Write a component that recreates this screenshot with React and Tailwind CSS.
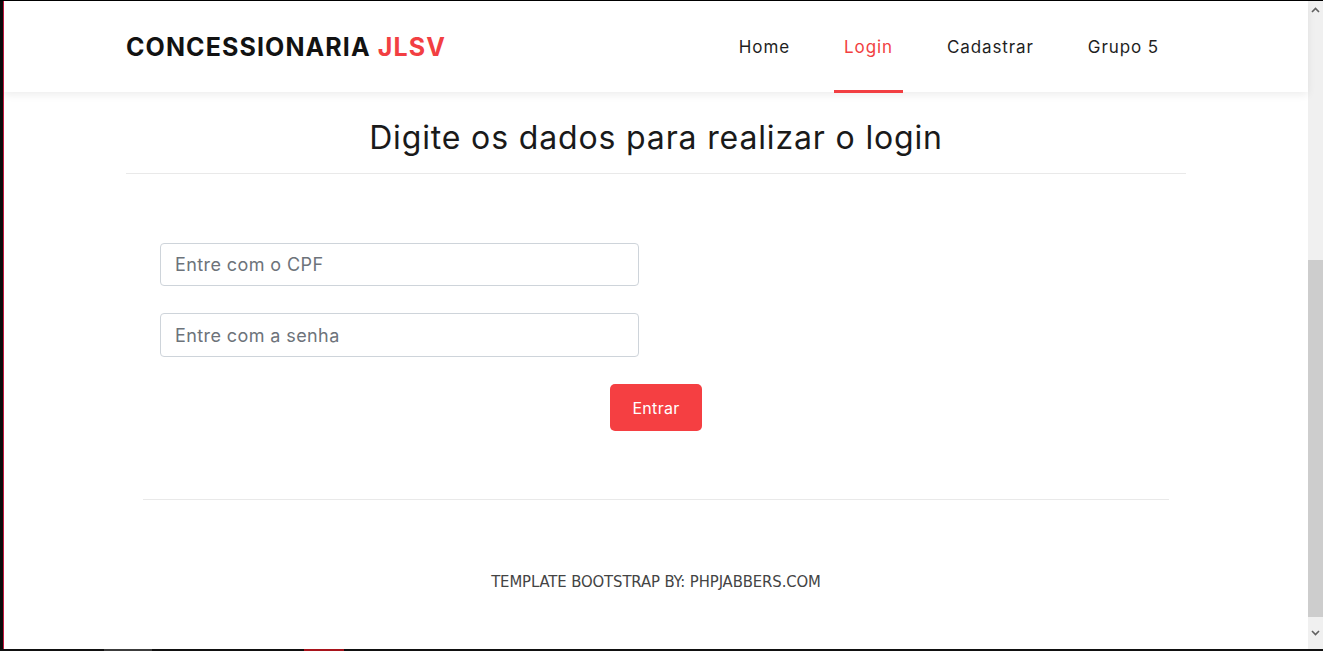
import React from "react";

const font = { fontFamily: "Inter, 'Noto Sans', sans-serif" };

export default function App() {
  return (
    <div className="w-[1323px] h-[651px] bg-black flex flex-col overflow-hidden" style={font}>
      <div className="h-px bg-black" />
      <div className="flex flex-1 min-h-0">
        <div className="w-[3px] bg-[#0b0b0b]" />
        <div className="w-px bg-[#c2183f]" />
        <main className="flex-1 bg-white flex flex-col relative min-w-0">
          <header className="h-[91px] bg-white shadow-[0_3px_8px_rgba(0,0,0,0.07)] relative z-10 flex items-stretch pl-[122px] pr-[139px] justify-between">
            <div className="flex items-center text-[25px] font-bold tracking-[1.1px] text-[#121212] pt-[3px]">
              CONCESSIONARIA&nbsp;<span className="text-[#f23f42]">JLSV</span>
            </div>
            <nav className="flex items-stretch gap-[34px] text-[17px] text-[#1f1f1f] tracking-[0.9px]">
              <a className="flex items-center px-[10px] pt-[3px]">Home</a>
              <a className="flex items-center px-[10px] pt-[3px] text-[#f23f42] relative">
                Login
                <span className="absolute left-0 right-0 -bottom-px h-[3px] bg-[#f23f42]" />
              </a>
              <a className="flex items-center px-[10px] pt-[3px]">Cadastrar</a>
              <a className="flex items-center px-[10px] pt-[3px]">Grupo 5</a>
            </nav>
          </header>

          <section className="px-[122px]">
            <h2 className="text-center text-[32px] font-normal text-[#1a1a1a] tracking-[0.85px] pt-[25px] pb-[15px] leading-[41px] border-b border-[#e9e9e9]">
              Digite os dados para realizar o login
            </h2>
          </section>

          <section className="pl-[156px] pt-[69px] flex flex-col gap-[27px]">
            <input
              placeholder="Entre com o CPF"
              className="w-[479px] h-[43px] border border-[#ced4da] rounded-[4px] px-[14px] text-[18px] tracking-[0.4px] placeholder:text-[#6d737a] outline-none"
            />
            <input
              placeholder="Entre com a senha"
              className="w-[479px] h-[44px] border border-[#ced4da] rounded-[4px] px-[14px] text-[18px] tracking-[0.4px] placeholder:text-[#6d737a] outline-none"
            />
          </section>
          <div className="flex justify-center pt-[27px]">
            <button className="w-[92px] h-[47px] bg-[#f53f42] text-white text-[16px] tracking-[0.3px] rounded-[5px]">
              Entrar
            </button>
          </div>

          <div className="mx-[139px] mt-[68px] border-t border-[#e9e9e9]" />
          <footer className="flex justify-center pt-[72px]">
            <span
              className="text-[16.5px] leading-[20px] text-[#444] font-light tracking-[-0.1px]"
              style={{ fontFamily: "'DejaVu Sans Condensed', 'Open Sans', sans-serif" }}
            >
              TEMPLATE BOOTSTRAP BY: PHPJABBERS.COM
            </span>
          </footer>
        </main>
        <aside className="w-[15px] bg-[#f0f0f0] flex flex-col items-center">
          <div className="h-[17px] flex items-center justify-center">
            <svg width="9" height="6" viewBox="0 0 9 6"><path d="M1 5 L4.5 1.5 L8 5" stroke="#606060" strokeWidth="1.6" fill="none" /></svg>
          </div>
          <div className="h-[242px]" />
          <div className="w-[15px] h-[357px] bg-[#cdcdcd]" />
          <div className="flex-1 flex items-center justify-center">
            <svg width="9" height="6" viewBox="0 0 9 6"><path d="M1 1 L4.5 4.5 L8 1" stroke="#606060" strokeWidth="1.6" fill="none" /></svg>
          </div>
        </aside>
      </div>
      <div className="h-[2px] flex">
        <div className="w-[104px] bg-[#111]" />
        <div className="w-[48px] bg-[#3c3c3c]" />
        <div className="w-[152px] bg-[#111]" />
        <div className="w-[40px] bg-[#a8141c]" />
        <div className="flex-1 bg-[#111]" />
      </div>
    </div>
  );
}
